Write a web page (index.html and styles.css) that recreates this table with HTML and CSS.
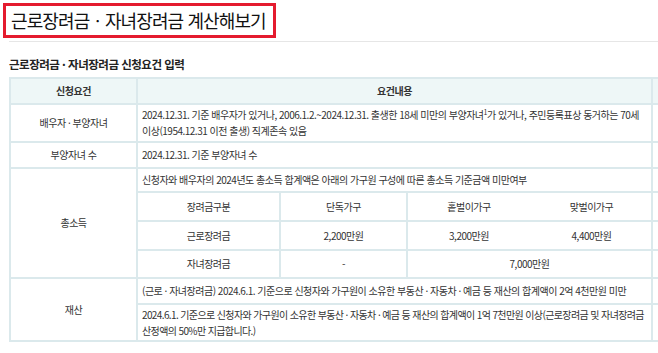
FILE: index.html
```html
<!DOCTYPE html>
<html lang="ko">
<head>
<meta charset="utf-8">
<link rel="stylesheet" href="styles.css">
</head>
<body>
<div class="page">
  <h1 class="title">근로장려금ㆍ자녀장려금 계산해보기</h1>
  <hr class="rule">
  <h2 class="sub">근로장려금 · 자녀장려금 신청요건 입력</h2>
  <table class="req">
    <colgroup>
      <col class="c0"><col class="c1"><col class="c2"><col class="c3"><col class="c4"><col class="c5">
    </colgroup>
    <tr class="h-head">
      <th>신청요건</th>
      <th colspan="4">요건내용</th>
      <th class="extra"></th>
    </tr>
    <tr class="h-r1">
      <td class="label">배우자 · 부양자녀</td>
      <td colspan="4" class="text nw">2024.12.31. 기준 배우자가 있거나, 2006.1.2.~2024.12.31. 출생한 18세 미만의 부양자녀<sup>1</sup>가 있거나, 주민등록표상 동거하는 70세<br>이상(1954.12.31 이전 출생) 직계존속 있음</td>
      <td class="extra"></td>
    </tr>
    <tr class="h-r2">
      <td class="label">부양자녀 수</td>
      <td colspan="4" class="text">2024.12.31. 기준 부양자녀 수</td>
      <td class="extra"></td>
    </tr>
    <tr class="h-r3">
      <td class="label" rowspan="4">총소득</td>
      <td colspan="4" class="text">신청자와 배우자의 2024년도 총소득 합계액은 아래의 가구원 구성에 따른 총소득 기준금액 미만여부</td>
      <td class="extra"></td>
    </tr>
    <tr class="h-r4">
      <td class="ctr">장려금구분</td>
      <td class="ctr">단독가구</td>
      <td class="ctr nr">홑벌이가구</td>
      <td class="ctr nl">맞벌이가구</td>
      <td class="extra"></td>
    </tr>
    <tr class="h-r5">
      <td class="ctr">근로장려금</td>
      <td class="ctr">2,200만원</td>
      <td class="ctr nr">3,200만원</td>
      <td class="ctr nl">4,400만원</td>
      <td class="extra"></td>
    </tr>
    <tr class="h-r6">
      <td class="ctr">자녀장려금</td>
      <td class="ctr">-</td>
      <td class="ctr" colspan="2">7,000만원</td>
      <td class="extra"></td>
    </tr>
    <tr class="h-r7">
      <td class="label" rowspan="2">재산</td>
      <td colspan="4" class="text nw">(근로 · 자녀장려금) 2024.6.1. 기준으로 신청자와 가구원이 소유한 부동산 · 자동차 · 예금 등 재산의 합계액이 2억 4천만원 미만</td>
      <td class="extra"></td>
    </tr>
    <tr class="h-r8">
      <td colspan="4" class="text nw tight">2024.6.1. 기준으로 신청자와 가구원이 소유한 부동산 · 자동차 · 예금 등 재산의 합계액이 1억 7천만원 이상(근로장려금 및 자녀장려금<br>산정액의 50%만 지급합니다.)</td>
      <td class="extra"></td>
    </tr>
  </table>
</div>
</body>
</html>
```

FILE: styles.css
```css
html, body {
  margin: 0;
  padding: 0;
  background: #fff;
}
body {
  width: 658px;
  height: 353px;
  overflow: hidden;
  font-family: "Noto Sans CJK KR", "Noto Sans", sans-serif;
  color: #333;
}
.page {
  width: 760px;
}
.title {
  display: inline-block;
  margin: 3px 0 0 3px;
  border: 3px solid #e41b2e;
  padding: 0 7px 0 5px;
  height: 29px;
  line-height: 28px;
  font-size: 18px;
  font-weight: 400;
  color: #111;
  letter-spacing: -0.9px;
}
.rule {
  margin: 3px 0 0 9px;
  border: 0;
  border-top: 1px solid #e6e6e6;
  height: 0;
}
.sub {
  margin: 13px 0 0 9px;
  font-size: 11.5px;
  font-weight: 700;
  color: #222;
  line-height: 18px;
  letter-spacing: -0.5px;
}
.req {
  margin: 4px 0 0 9px;
  border-collapse: collapse;
  table-layout: fixed;
  width: 722px;
  font-size: 10px;
  line-height: 16px;
  letter-spacing: -0.5px;
}
.c0 { width: 127px; }
.c1 { width: 143px; }
.c2 { width: 127px; }
.c3 { width: 124px; }
.c4 { width: 121px; }
.c5 { width: 80px; }
.req th, .req td {
  border: 2px solid #dbe9ec;
  padding: 0 5px;
  vertical-align: middle;
}
.req td.text {
  padding: 0 2px 0 4px;
  text-align: left;
}
.req td.nw {
  white-space: nowrap;
  overflow: hidden;
}
.req td.tight {
  letter-spacing: -0.62px;
}
.req td.nr { border-right-color: transparent; }
.req td.nl { border-left-color: transparent; }
.req th {
  background: #eef7f7;
  font-weight: 700;
  color: #333;
  text-align: center;
}
.req td.label, .req td.ctr {
  text-align: center;
}
.h-head { height: 26px; }
.h-r1 { height: 38px; }
.h-r2 { height: 26px; }
.h-r3 { height: 24px; }
.h-r4 { height: 29px; }
.h-r5 { height: 29px; }
.h-r6 { height: 28px; }
.h-r7 { height: 26px; }
.h-r8 { height: 37px; }
sup {
  font-size: 7px;
  line-height: 0;
  vertical-align: 4px;
}
```
